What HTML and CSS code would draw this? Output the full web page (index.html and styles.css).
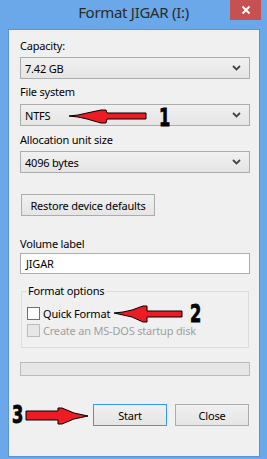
FILE: index.html
```html
<!DOCTYPE html>
<html>
<head>
  <title>Format JIGAR (I:)</title>
  <link rel="stylesheet" href="styles.css">
</head>
<body>
  <div class="window">
    <div class="titlebar">
      <span></span>
      <span class="title">Format JIGAR (I:)</span>
      <button class="close-button" aria-label="Close">
        <svg width="10" height="10" viewBox="0 0 10 10">
          <path d="M1.5 1.5 L8.5 8.5 M8.5 1.5 L1.5 8.5" stroke="#fff" stroke-width="2" fill="none"/>
        </svg>
      </button>
    </div>

    <div class="client">
      <label class="field-label label-capacity">Capacity:</label>
      <div class="combo combo-capacity">
        <span>7.42 GB</span>
        <svg class="chevron" width="9" height="6" viewBox="0 0 9 6"><path d="M1 1 L4.5 4.5 L8 1" stroke="#444" stroke-width="1.8" fill="none"/></svg>
      </div>

      <label class="field-label label-fs">File system</label>
      <div class="combo combo-fs">
        <span>NTFS</span>
        <svg class="chevron" width="9" height="6" viewBox="0 0 9 6"><path d="M1 1 L4.5 4.5 L8 1" stroke="#444" stroke-width="1.8" fill="none"/></svg>
      </div>

      <label class="field-label label-alloc">Allocation unit size</label>
      <div class="combo combo-alloc">
        <span>4096 bytes</span>
        <svg class="chevron" width="9" height="6" viewBox="0 0 9 6"><path d="M1 1 L4.5 4.5 L8 1" stroke="#444" stroke-width="1.8" fill="none"/></svg>
      </div>

      <button class="push-button restore-button">Restore device defaults</button>

      <label class="field-label label-volume">Volume label</label>
      <div class="text-box">JIGAR</div>

      <fieldset class="group-box">
        <legend>Format options</legend>
        <div class="check-row">
          <span class="check-box"></span>
          <span>Quick Format</span>
        </div>
        <div class="check-row disabled">
          <span class="check-box"></span>
          <span>Create an MS-DOS startup disk</span>
        </div>
      </fieldset>

      <div class="progress-bar"></div>

      <div class="button-row">
        <button class="push-button default-button">Start</button>
        <button class="push-button">Close</button>
      </div>
    </div>

    <svg class="annotations" width="267" height="459" viewBox="0 0 267 459">
      <g fill="#ed1c24" stroke="#000" stroke-width="1" stroke-linejoin="miter">
        <polygon points="69,116 78,115 87,113 101,110 106,110 107,113 146,113 146,119 107,119 106,123 101,123 87,119 78,117"/>
        <polygon points="114,313 123,312 132,310 143,306 147,306 147,311 182,311 182,317 147,317 147,322 143,322 132,317 123,315"/>
        <polygon points="26,411 58,411 58,408 62,408 74,413 88,416 74,419 62,424 58,424 58,420 26,420"/>
      </g>
      <g class="marker" fill="#000" stroke="#000" stroke-width="0.8">
        <text transform="translate(159 126) scale(0.72 1)">1</text>
        <text transform="translate(190 322) scale(0.72 1)">2</text>
        <text transform="translate(12 423) scale(0.72 1)">3</text>
      </g>
    </svg>
  </div>
</body>
</html>
```

FILE: styles.css
```css
:root {
  --frame-color: #6aa8e9;
  --frame-edge: #5a93d6;
  --client-color: #f0f0f0;
  --control-border: #acacac;
  --text-color: #000;
  --disabled-text: #a0a0a0;
}

body {
  margin: 0;
  font-family: "Noto Sans", sans-serif;
  font-size: 11px;
  letter-spacing: -0.2px;
  color: var(--text-color);
}

.window {
  position: relative;
  width: 267px;
  height: 459px;
  background-color: var(--frame-color);
  display: flex;
  flex-direction: column;
  overflow: hidden;
}

.titlebar {
  height: 29px;
  display: grid;
  grid-template-columns: 1fr auto 1fr;
  align-items: start;
}

.title {
  margin-top: 1px;
  font-size: 15px;
  line-height: 22px;
  letter-spacing: -0.3px;
  color: #2b2b2b;
}

.close-button {
  justify-self: end;
  margin-right: 6px;
  width: 31px;
  height: 20px;
  padding: 0;
  border: none;
  background-color: #c75050;
  display: flex;
  align-items: center;
  justify-content: center;
}

.client {
  flex: 1;
  margin: 0 7px 2px 8px;
  padding: 8px 9px 0 11px;
  border: 1px solid var(--frame-edge);
  background-color: var(--client-color);
  display: flex;
  flex-direction: column;
}

.field-label {
  display: block;
  line-height: 16px;
}

.label-fs { margin-top: 5px; }
.label-alloc { margin-top: 6px; }
.label-volume { margin-top: 20px; }

.combo {
  height: 22px;
  box-sizing: border-box;
  padding: 0 8px 0 4px;
  border: 1px solid var(--control-border);
  background: linear-gradient(#f0f0f0, #e5e5e5);
  display: flex;
  align-items: center;
  justify-content: space-between;
}

.combo-capacity { margin-top: 3px; }
.combo-fs { margin-top: 4px; }
.combo-alloc { margin-top: 3px; }

.push-button {
  height: 22px;
  box-sizing: border-box;
  padding: 0;
  border: 1px solid var(--control-border);
  background: linear-gradient(#f0f0f0, #e5e5e5);
  font-family: inherit;
  font-size: 11px;
  letter-spacing: -0.2px;
  color: var(--text-color);
}

.restore-button {
  align-self: flex-start;
  margin: 21px 0 0 1px;
  width: 134px;
}

.text-box {
  margin-top: 1px;
  height: 21px;
  box-sizing: border-box;
  padding: 0 5px;
  border: 1px solid #abadb3;
  background-color: #fff;
  line-height: 19px;
}

.group-box {
  margin: 9px 1px 0;
  padding: 6px 5px 8px;
  border: 1px solid #dcdcdc;
  min-width: 0;
}

.group-box legend {
  padding: 0 1px;
  line-height: 16px;
}

.check-row {
  height: 17px;
  display: flex;
  align-items: center;
  gap: 3px;
}

.check-box {
  width: 13px;
  height: 13px;
  box-sizing: border-box;
  border: 1px solid #707070;
  background-color: #fff;
}

.check-row.disabled {
  color: var(--disabled-text);
}

.check-row.disabled .check-box {
  border-color: #bcbcbc;
  background-color: #e6e6e6;
}

.progress-bar {
  margin-top: 14px;
  height: 14px;
  box-sizing: border-box;
  border: 1px solid #bcbcbc;
  background-color: #e6e6e6;
}

.button-row {
  margin-top: 28px;
  padding-right: 1px;
  display: flex;
  justify-content: flex-end;
  gap: 8px;
}

.button-row .push-button {
  width: 74px;
}

.default-button {
  border-color: #3399ff;
}

.annotations {
  position: absolute;
  left: 0;
  top: 0;
  pointer-events: none;
}

.marker text {
  font-family: "DejaVu Sans Condensed", "DejaVu Sans", sans-serif;
  font-weight: bold;
  font-size: 25px;
}
```
